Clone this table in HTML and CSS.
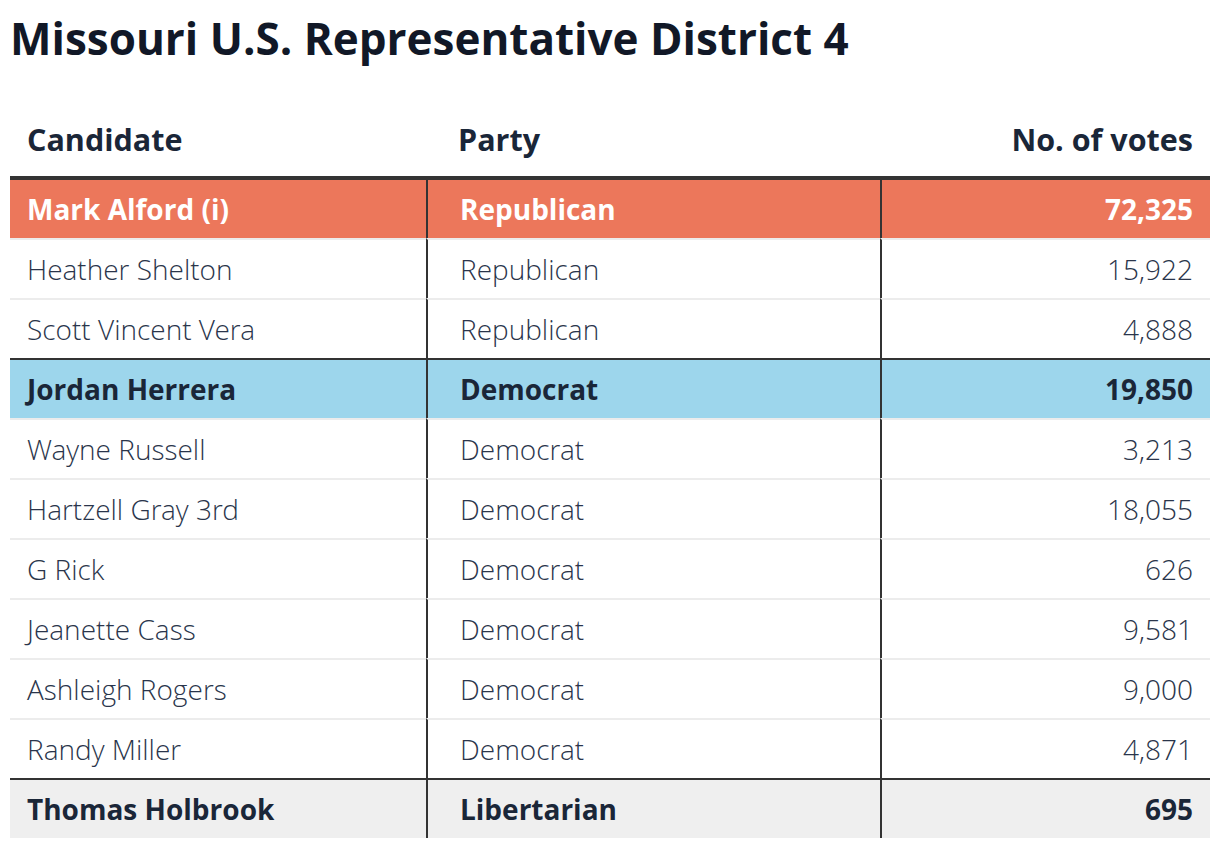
FILE: index.html
```html
<!DOCTYPE html>
<html lang="en">
<head>
<meta charset="utf-8">
<title>Missouri U.S. Representative District 4</title>
<link rel="stylesheet" href="styles.css">
</head>
<body>
<h1 class="title">Missouri U.S. Representative District 4</h1>
<table class="results">
  <thead>
    <tr>
      <th class="c-name">Candidate</th>
      <th class="c-party">Party</th>
      <th class="c-votes">No. of votes</th>
    </tr>
  </thead>
  <tbody>
    <tr class="win rep first"><td class="c-name">Mark Alford (i)</td><td class="c-party">Republican</td><td class="c-votes">72,325</td></tr>
    <tr><td class="c-name">Heather Shelton</td><td class="c-party">Republican</td><td class="c-votes">15,922</td></tr>
    <tr><td class="c-name">Scott Vincent Vera</td><td class="c-party">Republican</td><td class="c-votes">4,888</td></tr>
    <tr class="win dem group"><td class="c-name">Jordan Herrera</td><td class="c-party">Democrat</td><td class="c-votes">19,850</td></tr>
    <tr><td class="c-name">Wayne Russell</td><td class="c-party">Democrat</td><td class="c-votes">3,213</td></tr>
    <tr><td class="c-name">Hartzell Gray 3rd</td><td class="c-party">Democrat</td><td class="c-votes">18,055</td></tr>
    <tr><td class="c-name">G Rick</td><td class="c-party">Democrat</td><td class="c-votes">626</td></tr>
    <tr><td class="c-name">Jeanette Cass</td><td class="c-party">Democrat</td><td class="c-votes">9,581</td></tr>
    <tr><td class="c-name">Ashleigh Rogers</td><td class="c-party">Democrat</td><td class="c-votes">9,000</td></tr>
    <tr><td class="c-name">Randy Miller</td><td class="c-party">Democrat</td><td class="c-votes">4,871</td></tr>
    <tr class="win lib group"><td class="c-name">Thomas Holbrook</td><td class="c-party">Libertarian</td><td class="c-votes">695</td></tr>
  </tbody>
</table>
</body>
</html>
```
FILE: styles.css
```css
html, body {
  margin: 0;
  padding: 0;
  background: #fff;
}
body {
  padding: 0 10px;
  font-family: "Open Sans", "Liberation Sans", sans-serif;
  color: #1c2739;
}
.title {
  margin: 0;
  padding-top: 10px;
  font-size: 44px;
  line-height: 56px;
  font-weight: 700;
  color: #111827;
}
.results {
  margin-top: 36px;
  width: 1200px;
  border-collapse: separate;
  border-spacing: 0;
  table-layout: fixed;
}
.results th {
  font-size: 30.5px;
  font-weight: 700;
  text-align: left;
  height: 74px;
  padding: 0 17px;
  border-bottom: 4px solid #333;
  vertical-align: middle;
  color: #1a2638;
}
.results th.c-name { width: 416px; box-sizing: border-box; }
.results th.c-party { width: 454px; box-sizing: border-box; padding-left: 32px; }
.results th.c-votes { text-align: right; }
.results td {
  font-family: "Open Sans Light", "Open Sans", "Liberation Sans", sans-serif;
  font-size: 28px;
  font-weight: 300;
  height: 58px;
  padding: 0 17px;
  border-top: 2px solid #ececec;
  vertical-align: middle;
  white-space: nowrap;
  color: #2a354b;
}
.results td.c-party {
  border-left: 2px solid #333;
  padding-left: 32px;
}
.results td.c-votes {
  border-left: 2px solid #333;
  text-align: right;
}
.results tr.first td { border-top: 0; }
.results tr.group td { border-top: 2px solid #333; }
.results tr.win td {
  font-family: "Open Sans", "Liberation Sans", sans-serif;
  font-weight: 700;
  color: #1a2638;
}
.results tr.rep td { background: #ec775b; color: #fff; }
.results tr.dem td { background: #9dd6ec; }
.results tr.lib td { background: #efefef; }
```
